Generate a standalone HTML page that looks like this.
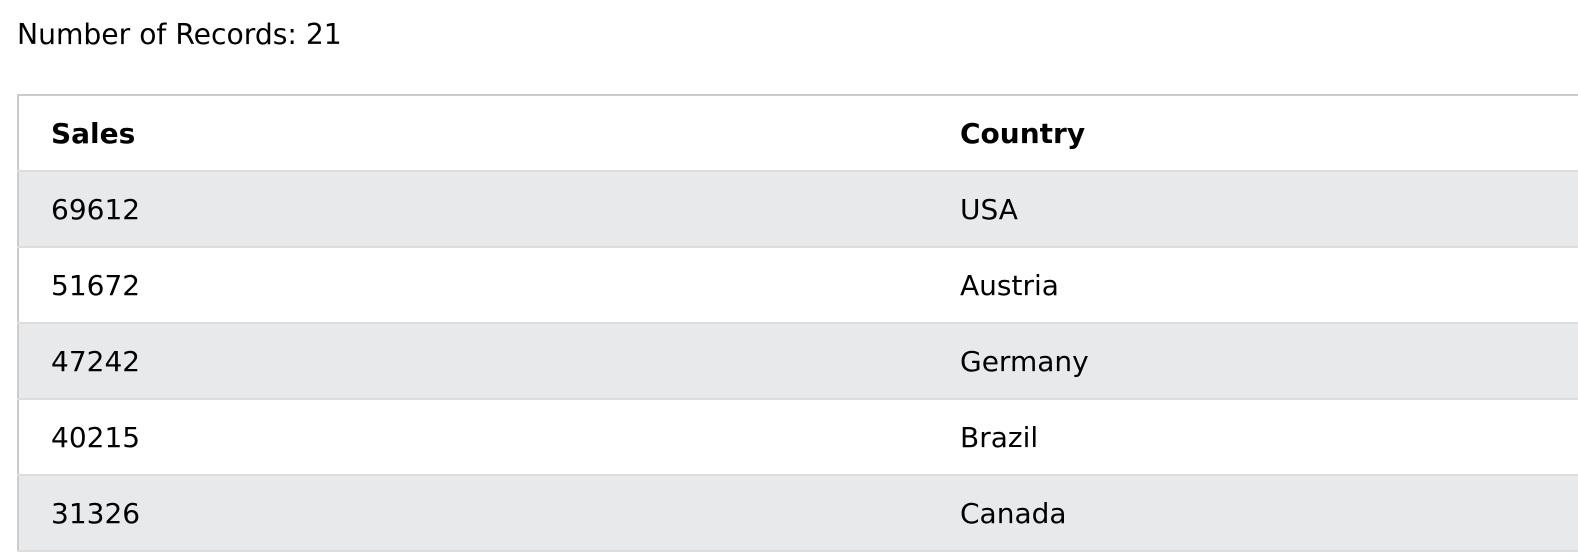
<!DOCTYPE html>
<html><head><meta charset="utf-8"><style>
html,body{margin:0;padding:0;background:#fff;width:1578px;height:514px;overflow:hidden}
body{font-family:"DejaVu Sans","Liberation Sans",sans-serif;font-size:28px;color:#000}
.hdr{position:absolute;left:17px;top:17px;line-height:36px;font-size:28.2px}
table{position:absolute;left:17px;top:94px;width:1800px;border-collapse:collapse;border:2px solid #ccc}
td,th{text-align:left;padding:0 0 0 32px;height:74px;border-bottom:2px solid #ddd;font-size:28px}
th{font-weight:bold}
tr:nth-child(even){background:#e7e9eb}
td:first-child,th:first-child{width:872px}
td:last-child,th:last-child{padding-left:37px}
</style></head><body>
<div class="hdr">Number of Records: 21</div>
<table>
<tr><th>Sales</th><th>Country</th></tr>
<tr><td>69612</td><td>USA</td></tr>
<tr><td>51672</td><td>Austria</td></tr>
<tr><td>47242</td><td>Germany</td></tr>
<tr><td>40215</td><td>Brazil</td></tr>
<tr><td>31326</td><td>Canada</td></tr>
</table>
</body></html>
